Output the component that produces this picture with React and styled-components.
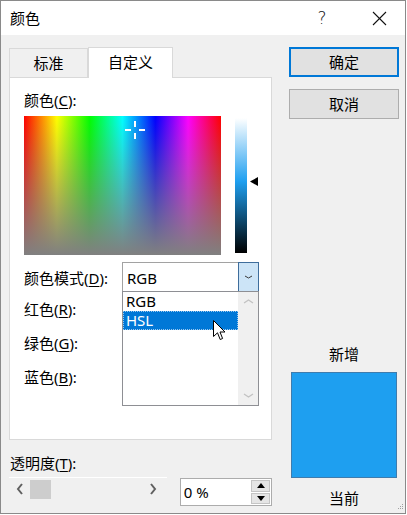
import React from 'react';
import styled, { createGlobalStyle } from 'styled-components';

const Global = createGlobalStyle`
  html, body { margin: 0; padding: 0; background: #ffffff; }
  body {
    font-family: "Noto Sans", "Noto Sans CJK SC", sans-serif;
    font-size: 15px;
    color: #000;
  }
  * { box-sizing: border-box; }
  u { text-decoration: underline; text-underline-offset: 2px; text-decoration-thickness: 1px; }
`;

const Window = styled.div`
  position: relative;
  width: 406px;
  height: 514px;
  border: 1px solid #8a8a8a;
  background: #f0f0f0;
  display: flex;
  flex-direction: column;
  overflow: hidden;
`;

const TitleBar = styled.div`
  height: 34px;
  background: #fff;
  display: flex;
  align-items: center;
  padding-left: 9px;
`;

const Title = styled.div`
  flex: 1;
  line-height: 20px;
`;

const CaptionBtn = styled.div`
  width: 46px;
  height: 34px;
  display: flex;
  align-items: center;
  justify-content: center;
  margin-right: ${(p) => p.$mr || 0}px;
  font-size: 17px;
  font-family: "DejaVu Sans", "Noto Sans", sans-serif;
  font-weight: 300;
  color: #111;
`;

const Body = styled.div`
  display: flex;
  gap: 17px;
  padding: 12px 0 0 8px;
  flex: 1;
`;

const LeftCol = styled.div`
  width: 263px;
  display: flex;
  flex-direction: column;
`;

const TabRow = styled.div`
  display: flex;
  align-items: flex-end;
  height: 30px;
  position: relative;
  z-index: 2;
`;

const Tab = styled.div`
  height: ${(p) => (p.$active ? 31 : 29)}px;
  width: ${(p) => (p.$active ? 85 : 79)}px;
  margin-bottom: ${(p) => (p.$active ? -1 : 0)}px;
  background: ${(p) => (p.$active ? '#fff' : '#f0f0f0')};
  border: 1px solid #d9d9d9;
  border-bottom: none;
  display: flex;
  align-items: center;
  justify-content: center;
  line-height: 20px;
  padding-bottom: ${(p) => (p.$active ? 2 : 0)}px;
`;

const Panel = styled.div`
  position: relative;
  z-index: 1;
  height: 363px;
  background: #fff;
  border: 1px solid #d9d9d9;
  padding: 12px 0 0 14px;
  display: flex;
  flex-direction: column;
`;

const Label = styled.div`
  line-height: 20px;
  white-space: nowrap;
`;

const SpectrumRow = styled.div`
  display: flex;
  margin-top: 6px;
`;

const Spectrum = styled.div`
  position: relative;
  width: 197px;
  height: 139px;
  background:
    linear-gradient(to bottom, rgba(128, 128, 128, 0), #808080),
    linear-gradient(to right, #ff0000, #ffff00, #00ff00, #00ffff, #0000ff, #ff00ff, #ff0000);
`;

const Crosshair = styled.svg`
  position: absolute;
  left: 101px;
  top: 5px;
`;

const LumWrap = styled.div`
  position: relative;
  margin: 2px 0 0 14px;
  width: 12px;
  height: 135px;
  background: linear-gradient(to bottom, #ffffff 0%, #1e9ff0 47%, #000000 100%);
`;

const LumMarker = styled.svg`
  position: absolute;
  left: 15px;
  top: 59px;
`;

const ModeRow = styled.div`
  display: flex;
  align-items: center;
  height: 30px;
  margin-top: 7px;
`;

const ModeLabel = styled(Label)`
  width: 98px;
  padding-top: 2px;
`;

const SelectBox = styled.div`
  position: relative;
  width: 137px;
  height: 30px;
  border: 1px solid #a2a2a2;
  background: #fff;
  display: flex;
  z-index: 3;
`;

const SelectText = styled.div`
  flex: 1;
  padding: 2px 0 0 4px;
  line-height: 26px;
`;

const SelectBtn = styled.div`
  width: 21px;
  margin: -1px -1px -1px 0;
  background: #cce4f7;
  border: 1px solid #3e6d9c;
  display: flex;
  align-items: center;
  justify-content: center;
`;

const DropList = styled.div`
  position: absolute;
  left: -1px;
  top: 28px;
  width: 137px;
  height: 115px;
  background: #fff;
  border: 1px solid #8e8f94;
  display: flex;
`;

const Items = styled.div`
  flex: 1;
  display: flex;
  flex-direction: column;
`;

const Item = styled.div`
  height: 19px;
  line-height: 19px;
  padding-left: 3px;
  background: ${(p) => (p.$selected ? '#0078d7' : 'transparent')};
  color: ${(p) => (p.$selected ? '#fff' : '#000')};
  outline: ${(p) => (p.$selected ? '1px dotted #9cc8ee' : 'none')};
  outline-offset: -1px;
`;

const ListScroll = styled.div`
  width: 20px;
  background: #f0f0f0;
  display: flex;
  flex-direction: column;
  justify-content: space-between;
  align-items: center;
  padding: 6px 0 6px;
`;

const Cursor = styled.svg`
  position: absolute;
  left: 90px;
  top: 28px;
`;

const ColorLabel = styled.div`
  height: 34px;
  line-height: 34px;
`;

const TransLabel = styled(Label)`
  margin-top: 13px;
  padding-left: 1px;
`;

const CtrlRow = styled.div`
  display: flex;
  align-items: flex-start;
  margin-top: 4px;
`;

const HScroll = styled.div`
  width: 159px;
  height: 23px;
  border-top: 1px solid #ffffff;
  background: #f0f0f0;
  display: flex;
  align-items: center;
  padding-right: 3px;
`;

const ArrowBtn = styled.div`
  width: 21px;
  height: 22px;
  display: flex;
  align-items: center;
  justify-content: center;
`;

const Thumb = styled.div`
  width: 21px;
  height: 19px;
  background: #cdcdcd;
`;

const Fill = styled.div`
  flex: 1;
`;

const SpinBox = styled.div`
  margin: 1px 0 0 13px;
  width: 93px;
  height: 28px;
  border: 1px solid #acacac;
  background: #fff;
  display: flex;
`;

const SpinText = styled.div`
  flex: 1;
  padding-left: 3px;
  line-height: 26px;
  font-family: "Noto Sans", sans-serif;
`;

const SpinBtns = styled.div`
  width: 19px;
  margin: 1px 1px 1px 0;
  display: flex;
  flex-direction: column;
  gap: 1px;
`;

const SpinBtn = styled.div`
  flex: 1;
  background: #e5e5e5;
  border: 1px solid #c4c4c4;
  display: flex;
  align-items: center;
  justify-content: center;
`;

const RightCol = styled.div`
  width: 110px;
  display: flex;
  flex-direction: column;
`;

const Button = styled.div`
  height: 30px;
  margin-top: ${(p) => p.$mt || 0}px;
  background: #e1e1e1;
  border: ${(p) => (p.$default ? '2px solid #0078d7' : '1px solid #adadad')};
  display: flex;
  align-items: center;
  justify-content: center;
  line-height: 20px;
`;

const CenterLabel = styled.div`
  margin-top: ${(p) => p.$mt}px;
  text-align: center;
  line-height: 20px;
`;

const Preview = styled.div`
  margin: 8px 2px 0;
  width: 106px;
  height: 106px;
  background: ${(p) => p.$color};
  border: 1px solid #3f7cad;
`;

const Grip = styled.svg`
  position: absolute;
  right: 1px;
  bottom: 1px;
`;

const Chevron = ({ dir, color = '#606060', w = 8, h = 12, sw = 2 }) => {
  const pts = {
    left: `${w - 2},1 2,${h / 2} ${w - 2},${h - 1}`,
    right: `2,1 ${w - 2},${h / 2} 2,${h - 1}`,
    up: `1,${h - 2} ${w / 2},2 ${w - 1},${h - 2}`,
    down: `1,2 ${w / 2},${h - 2} ${w - 1},2`,
  }[dir];
  return (
    <svg width={w} height={h} viewBox={`0 0 ${w} ${h}`}>
      <polyline points={pts} fill="none" stroke={color} strokeWidth={sw} />
    </svg>
  );
};

const Tri = ({ dir }) => (
  <svg width="8" height="5" viewBox="0 0 8 5">
    <polygon points={dir === 'up' ? '0,5 4,0 8,5' : '0,0 4,5 8,0'} fill="#000" />
  </svg>
);

export default function App() {
  return (
    <>
      <Global />
      <Window>
        <TitleBar>
          <Title>颜色</Title>
          <CaptionBtn $mr={11}>?</CaptionBtn>
          <CaptionBtn $mr={3}>
            <svg width="15" height="15" viewBox="0 0 15 15">
              <line x1="1" y1="1" x2="14" y2="14" stroke="#111" strokeWidth="1.1" />
              <line x1="14" y1="1" x2="1" y2="14" stroke="#111" strokeWidth="1.1" />
            </svg>
          </CaptionBtn>
        </TitleBar>
        <Body>
          <LeftCol>
            <TabRow>
              <Tab>标准</Tab>
              <Tab $active>自定义</Tab>
            </TabRow>
            <Panel>
              <Label>
                颜色(<u>C</u>):
              </Label>
              <SpectrumRow>
                <Spectrum>
                  <Crosshair width="20" height="18" viewBox="0 0 20 18">
                    <rect x="0" y="8" width="6" height="2" fill="#fff" />
                    <rect x="14" y="8" width="6" height="2" fill="#fff" />
                    <rect x="9" y="0" width="2" height="6" fill="#fff" />
                    <rect x="9" y="12" width="2" height="6" fill="#fff" />
                  </Crosshair>
                </Spectrum>
                <LumWrap>
                  <LumMarker width="8" height="9" viewBox="0 0 8 9">
                    <polygon points="0,4.5 8,0 8,9" fill="#000" />
                  </LumMarker>
                </LumWrap>
              </SpectrumRow>
              <ModeRow>
                <ModeLabel>
                  颜色模式(<u>D</u>):
                </ModeLabel>
                <SelectBox>
                  <SelectText>RGB</SelectText>
                  <SelectBtn>
                    <Chevron dir="down" color="#3a3a3a" w={9} h={6} sw={1} />
                  </SelectBtn>
                  <DropList>
                    <Items>
                      <Item>RGB</Item>
                      <Item $selected>HSL</Item>
                    </Items>
                    <ListScroll>
                      <Chevron dir="up" color="#c2c2c2" w={11} h={7} sw={1.3} />
                      <Chevron dir="down" color="#c2c2c2" w={11} h={7} sw={1.3} />
                    </ListScroll>
                    <Cursor width="13" height="21" viewBox="0 0 13 21">
                      <path
                        d="M0.5 0.5 L0.5 16.5 L4.5 12.8 L7.2 19.5 L9.6 18.5 L7 12 L12 12 Z"
                        fill="#fff"
                        stroke="#000"
                        strokeWidth="1"
                        strokeLinejoin="miter"
                      />
                    </Cursor>
                  </DropList>
                </SelectBox>
              </ModeRow>
              <ColorLabel>
                红色(<u>R</u>):
              </ColorLabel>
              <ColorLabel>
                绿色(<u>G</u>):
              </ColorLabel>
              <ColorLabel>
                蓝色(<u>B</u>):
              </ColorLabel>
            </Panel>
            <TransLabel>
              透明度(<u>T</u>):
            </TransLabel>
            <CtrlRow>
              <HScroll>
                <ArrowBtn>
                  <Chevron dir="left" />
                </ArrowBtn>
                <Thumb />
                <Fill />
                <ArrowBtn>
                  <Chevron dir="right" />
                </ArrowBtn>
              </HScroll>
              <SpinBox>
                <SpinText>0 %</SpinText>
                <SpinBtns>
                  <SpinBtn>
                    <Tri dir="up" />
                  </SpinBtn>
                  <SpinBtn>
                    <Tri dir="down" />
                  </SpinBtn>
                </SpinBtns>
              </SpinBox>
            </CtrlRow>
          </LeftCol>
          <RightCol>
            <Button $default>确定</Button>
            <Button $mt={12}>取消</Button>
            <CenterLabel $mt={225}>新增</CenterLabel>
            <Preview $color="#1e9ff0" />
            <CenterLabel $mt={10}>当前</CenterLabel>
          </RightCol>
        </Body>
        <Grip width="10" height="10" viewBox="0 0 10 10">
          <rect x="8" y="2" width="1" height="1" fill="#a0a0a0" />
          <rect x="6" y="4" width="1" height="1" fill="#a0a0a0" />
          <rect x="8" y="4" width="1" height="1" fill="#a0a0a0" />
          <rect x="4" y="6" width="1" height="1" fill="#a0a0a0" />
          <rect x="6" y="6" width="1" height="1" fill="#a0a0a0" />
          <rect x="8" y="6" width="1" height="1" fill="#a0a0a0" />
        </Grip>
      </Window>
    </>
  );
}
